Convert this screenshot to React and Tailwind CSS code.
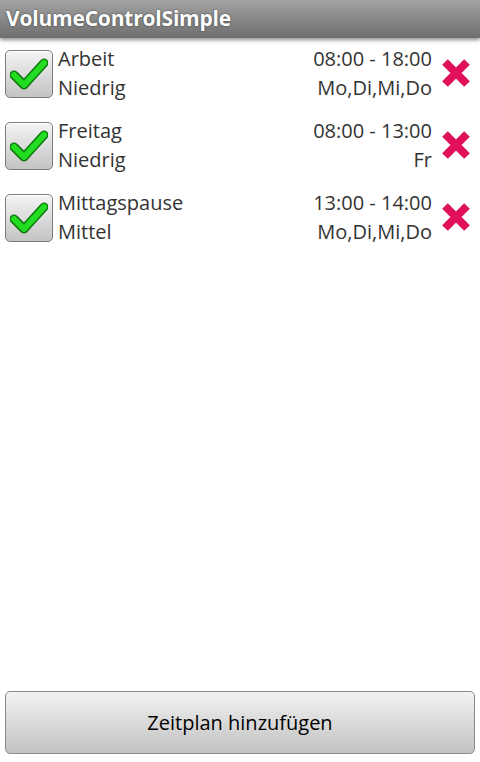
import React from "react";

const schedules = [
  { name: "Arbeit", level: "Niedrig", time: "08:00 - 18:00", days: "Mo,Di,Mi,Do" },
  { name: "Freitag", level: "Niedrig", time: "08:00 - 13:00", days: "Fr" },
  { name: "Mittagspause", level: "Mittel", time: "13:00 - 14:00", days: "Mo,Di,Mi,Do" },
];

// Old Android style checkbox
const CheckBox = () => (
  <div className="w-[48px] h-[48px] shrink-0 rounded-[5px] border border-[#7a7a7a] bg-gradient-to-b from-[#f4f4f4] to-[#c4c4c4] flex items-center justify-center shadow-[inset_0_1px_0_#fff]">
    <svg width="38" height="34" viewBox="0 0 38 34">
      <path
        d="M4 18 L14 28 L34 6"
        fill="none"
        stroke="#0a7a0a"
        strokeWidth="9"
        strokeLinecap="round"
        strokeLinejoin="round"
      />
      <path
        d="M4 18 L14 28 L34 6"
        fill="none"
        stroke="#22dd22"
        strokeWidth="6"
        strokeLinecap="round"
        strokeLinejoin="round"
      />
    </svg>
  </div>
);

const DeleteIcon = () => (
  <svg width="32" height="32" viewBox="0 0 32 32" className="shrink-0">
    <path
      d="M5 5 L27 27 M27 5 L5 27"
      stroke="#e0105a"
      strokeWidth="8"
      strokeLinecap="butt"
    />
  </svg>
);

export default function App() {
  return (
    <div
      className="w-[480px] h-[762px] flex flex-col bg-white overflow-hidden"
      style={{ fontFamily: '"Open Sans", "Noto Sans", sans-serif' }}
    >
      <div className="h-[38px] shrink-0 bg-gradient-to-b from-[#a3a3a3] to-[#6e6e6e] flex items-center px-[6px] shadow-[0_2px_4px_rgba(0,0,0,0.45)] relative z-10">
        <span className="text-white font-bold text-[21px] tracking-[-0.2px] [text-shadow:0_0_2px_rgba(0,0,0,0.6)]">
          VolumeControlSimple
        </span>
      </div>

      <div className="flex-1 flex flex-col pt-[6px]">
        {schedules.map((s) => (
          <div key={s.name} className="h-[72px] flex items-start pl-[5px] pr-[8px]">
            <div className="pt-[6px]">
              <CheckBox />
            </div>
            <div className="flex-1 flex flex-col pl-[5px] text-[20px] leading-[29px] text-[#333]">
              <div className="flex justify-between">
                <span>{s.name}</span>
                <span>{s.time}</span>
              </div>
              <div className="flex justify-between">
                <span>{s.level}</span>
                <span>{s.days}</span>
              </div>
            </div>
            <div className="pl-[8px] pt-[13px]">
              <DeleteIcon />
            </div>
          </div>
        ))}
      </div>

      <div className="px-[5px] pb-[8px]">
        <button className="w-full h-[63px] rounded-[5px] border border-[#8a8a8a] bg-gradient-to-b from-[#f2f2f2] to-[#c2c2c2] text-[20px] text-black">
          Zeitplan hinzufügen
        </button>
      </div>
    </div>
  );
}
